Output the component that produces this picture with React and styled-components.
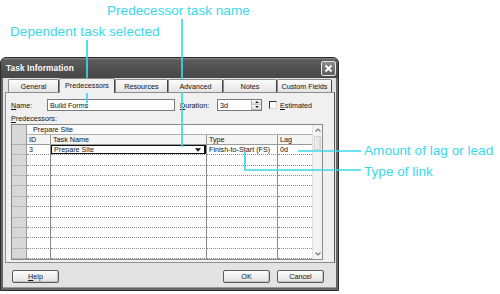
import React from 'react';
import styled, { createGlobalStyle } from 'styled-components';

const CYAN = '#3ad8ea';

const GlobalStyle = createGlobalStyle`
  html, body {
    margin: 0;
    padding: 0;
    background: #fff;
  }
  body {
    font-family: "Liberation Sans", Arial, sans-serif;
  }
`;

const tabs = [
  { label: 'General', w: 51 },
  { label: 'Predecessors', w: 56, active: true },
  { label: 'Resources', w: 53 },
  { label: 'Advanced', w: 55 },
  { label: 'Notes', w: 54 },
  { label: 'Custom Fields', w: 55 },
];

const EMPTY_ROWS = 10;

function DownTri({ size = 5 }) {
  return (
    <svg width={size} height={size - 2} viewBox="0 0 5 3">
      <polygon points="0,0 5,0 2.5,3" fill="#111" />
    </svg>
  );
}

function UpTri({ size = 5 }) {
  return (
    <svg width={size} height={size - 2} viewBox="0 0 5 3">
      <polygon points="0,3 5,3 2.5,0" fill="#111" />
    </svg>
  );
}

function Chevron({ up }) {
  return (
    <svg width="6" height="4" viewBox="0 0 6 4">
      <polyline
        points={up ? '0.5,3.5 3,1 5.5,3.5' : '0.5,0.5 3,3 5.5,0.5'}
        fill="none"
        stroke="#777"
        strokeWidth="1.2"
      />
    </svg>
  );
}

function App() {
  return (
    <>
      <GlobalStyle />
      <Stage>
        <Window>
          <TitleBar>
            <Title>Task Information</Title>
            <CloseBtn>
              <svg width="9" height="9" viewBox="0 0 9 9">
                <path d="M1.5 1.5 L7.5 7.5 M7.5 1.5 L1.5 7.5" stroke="#fff" strokeWidth="1.8" />
              </svg>
            </CloseBtn>
          </TitleBar>

          <Client>
            <TabStrip>
              {tabs.map((t) => (
                <Tab key={t.label} $w={t.w} $active={t.active}>
                  {t.label}
                </Tab>
              ))}
            </TabStrip>

            <Panel>
              <FieldRow>
                <Label $w={36}>
                  <u>N</u>ame:
                </Label>
                <TextBox $w={128}>Build Forms</TextBox>
                <Label $w={37} $ml={5}>
                  <u>D</u>uration:
                </Label>
                <SpinBox>
                  <SpinText>3d</SpinText>
                  <Spinner>
                    <SpinHalf>
                      <UpTri size={4} />
                    </SpinHalf>
                    <SpinHalf>
                      <DownTri size={4} />
                    </SpinHalf>
                  </Spinner>
                </SpinBox>
                <CheckBox />
                <Label $ml={3}>
                  <u>E</u>stimated
                </Label>
              </FieldRow>

              <SectionLabel>
                <u>P</u>redecessors:
              </SectionLabel>

              <GridFrame>
                <Grid>
                  <Corner />
                  <EditBar>Prepare Site</EditBar>
                  <HeadCell>ID</HeadCell>
                  <HeadCell>Task Name</HeadCell>
                  <HeadCell>Type</HeadCell>
                  <HeadCell $last>Lag</HeadCell>

                  <RowHead />
                  <Cell>3</Cell>
                  <Cell $flush>
                    <Combo>
                      <span>Prepare Site</span>
                      <DownTri size={6} />
                    </Combo>
                  </Cell>
                  <Cell>Finish-to-Start (FS)</Cell>
                  <Cell $last>0d</Cell>

                  {Array.from({ length: EMPTY_ROWS }).map((_, i) => (
                    <React.Fragment key={i}>
                      <RowHead />
                      <Cell />
                      <Cell />
                      <Cell />
                      <Cell $last />
                    </React.Fragment>
                  ))}
                </Grid>
                <ScrollBar>
                  <ScrollBtn>
                    <Chevron up />
                  </ScrollBtn>
                  <Thumb />
                  <ScrollTrack />
                  <ScrollBtn>
                    <Chevron />
                  </ScrollBtn>
                </ScrollBar>
              </GridFrame>
            </Panel>

            <ButtonRow>
              <Button>
                <u>H</u>elp
              </Button>
              <ButtonGroup>
                <Button>OK</Button>
                <Button>Cancel</Button>
              </ButtonGroup>
            </ButtonRow>
          </Client>
        </Window>

        <Callout $x={107} $y={3.5}>Predecessor task name</Callout>
        <Callout $x={10} $y={24.5}>Dependent task selected</Callout>
        <Callout $x={364} $y={144}>Amount of lag or lead</Callout>
        <Callout $x={364} $y={164.5}>Type of link</Callout>

        <Leaders width="500" height="294" viewBox="0 0 500 294">
          <g stroke={CYAN} strokeWidth="1.7" fill="none">
            <line x1="182" y1="19" x2="182" y2="147" />
            <line x1="87" y1="40" x2="87" y2="103" />
            <line x1="298" y1="151" x2="361" y2="151" />
            <polyline points="245,152 245,170 361,170" />
          </g>
        </Leaders>
      </Stage>
    </>
  );
}

const Stage = styled.div`
  position: relative;
  width: 500px;
  height: 294px;
  box-sizing: border-box;
  padding-top: 57px;
  overflow: hidden;
  background: #fff;
`;

const Window = styled.div`
  width: 339px;
  height: 234px;
  box-sizing: border-box;
  border: 1px solid #2c2c2c;
  border-radius: 6px 6px 0 0;
  background: #666;
  display: flex;
  flex-direction: column;
  overflow: hidden;
`;

const TitleBar = styled.div`
  height: 20px;
  flex-shrink: 0;
  display: flex;
  align-items: center;
  justify-content: space-between;
  padding: 0 2px 0 5px;
  background: linear-gradient(#8a8a8a 0, #5c5c5c 2px, #4f4f4f 60%, #474747 100%);
`;

const Title = styled.div`
  color: #fff;
  font-size: 8.3px;
  font-weight: bold;
  letter-spacing: 0.1px;
`;

const CloseBtn = styled.div`
  width: 13px;
  height: 13px;
  border: 1px solid #e6e6e6;
  border-radius: 2px;
  background: linear-gradient(#8c8c8c, #5e5e5e);
  display: flex;
  align-items: center;
  justify-content: center;
`;

const Client = styled.div`
  flex: 1;
  margin: 0 2px 2px;
  padding: 0 1px 0 2px;
  background: #e3e3e3;
  border-bottom: 1px solid #9a9a9a;
  display: flex;
  flex-direction: column;
  font-size: 7.2px;
  color: #111;
`;

const TabStrip = styled.div`
  display: flex;
  align-items: flex-end;
  height: 13px;
  margin-top: 1px;
  padding-left: 3px;
  position: relative;
  z-index: 1;
`;

const Tab = styled.div`
  width: ${(p) => p.$w}px;
  box-sizing: border-box;
  height: ${(p) => (p.$active ? 15 : 13)}px;
  margin-bottom: ${(p) => (p.$active ? -1 : 0)}px;
  border: 1px solid #8c8c8c;
  border-right-color: #444;
  border-bottom: none;
  border-radius: 2px 2px 0 0;
  background: ${(p) =>
    p.$active ? '#f0f0f0' : 'linear-gradient(#fbfbfb, #e4e4e4)'};
  display: flex;
  align-items: center;
  justify-content: center;
  padding-bottom: ${(p) => (p.$active ? 2 : 0)}px;
  white-space: nowrap;
`;

const Panel = styled.div`
  height: 171px;
  box-sizing: border-box;
  border: 1px solid #8c8c8c;
  border-right-color: #555;
  background: #f0f0f0;
  padding: 6px 0 0 5px;
  display: flex;
  flex-direction: column;
`;

const FieldRow = styled.div`
  display: flex;
  align-items: center;
  height: 12px;
`;

const Label = styled.div`
  width: ${(p) => (p.$w ? `${p.$w}px` : 'auto')};
  margin-left: ${(p) => p.$ml || 0}px;
  white-space: nowrap;
  flex-shrink: 0;
`;

const TextBox = styled.div`
  width: ${(p) => p.$w}px;
  height: 12px;
  box-sizing: border-box;
  border: 1px solid #7a7a7a;
  background: #fff;
  padding-left: 2px;
  display: flex;
  align-items: center;
`;

const SpinBox = styled.div`
  width: 45px;
  height: 12px;
  box-sizing: border-box;
  border: 1px solid #7a7a7a;
  background: #fff;
  display: flex;
`;

const SpinText = styled.div`
  flex: 1;
  padding-left: 2px;
  display: flex;
  align-items: center;
`;

const Spinner = styled.div`
  width: 9px;
  display: flex;
  flex-direction: column;
  border-left: 1px solid #bbb;
`;

const SpinHalf = styled.div`
  flex: 1;
  background: linear-gradient(#fafafa, #dcdcdc);
  border-bottom: 1px solid #c4c4c4;
  display: flex;
  align-items: center;
  justify-content: center;
`;

const CheckBox = styled.div`
  width: 8px;
  height: 8px;
  box-sizing: border-box;
  margin-left: 7px;
  background: #fff;
  border: 1px solid #d8d8d8;
  border-top-color: #333;
  border-left-color: #333;
`;

const SectionLabel = styled.div`
  margin-top: 3px;
  height: 9px;
  line-height: 9px;
`;

const GridFrame = styled.div`
  margin-top: 1px;
  width: 312px;
  height: 136px;
  box-sizing: border-box;
  border: 1px solid #8a8a8a;
  background: #fff;
  display: flex;
`;

const Grid = styled.div`
  width: 300px;
  display: grid;
  grid-template-columns: 15px 24px 156px 71px 34px;
  grid-template-rows: 10px 10px repeat(11, 10.36px);
  align-content: start;
`;

const Corner = styled.div`
  grid-row: 1 / span 2;
  background: #d8d8d8;
  border-right: 1px solid #9a9a9a;
  border-bottom: 1px solid #b0b0b0;
`;

const EditBar = styled.div`
  grid-column: 2 / span 4;
  padding-left: 6px;
  display: flex;
  align-items: center;
  border-bottom: 1px solid #b0b0b0;
  background: #fbfbfb;
`;

const HeadCell = styled.div`
  padding-left: 2px;
  display: flex;
  align-items: center;
  background: #f4f4f4;
  border-right: ${(p) => (p.$last ? 'none' : '1px solid #9a9a9a')};
  border-bottom: 1px solid #9a9a9a;
  white-space: nowrap;
`;

const RowHead = styled.div`
  background: #d8d8d8;
  border-right: 1px solid #9a9a9a;
  border-bottom: 1px solid #b8b8b8;
`;

const Cell = styled.div`
  padding-left: ${(p) => (p.$flush ? 0 : 2)}px;
  display: flex;
  align-items: center;
  border-right: ${(p) => (p.$last ? 'none' : '1px solid #8a8a8a')};
  border-bottom: 1px dotted #8a8a8a;
  white-space: nowrap;
  overflow: hidden;
`;

const Combo = styled.div`
  flex: 1;
  height: 100%;
  box-sizing: border-box;
  border: 1px solid #111;
  border-right-width: 2px;
  padding: 0 3px 0 2px;
  display: flex;
  align-items: center;
  justify-content: space-between;
`;

const ScrollBar = styled.div`
  width: 10px;
  display: flex;
  flex-direction: column;
  background: #f2f2f2;
  border-left: 1px solid #e0e0e0;
`;

const ScrollBtn = styled.div`
  height: 10px;
  display: flex;
  align-items: center;
  justify-content: center;
  background: #f4f4f4;
`;

const Thumb = styled.div`
  height: 12px;
  margin: 1px 1px 0;
  border: 1px solid #cfcfcf;
  border-radius: 1px;
  background: linear-gradient(90deg, #f4f4f4, #dedede);
`;

const ScrollTrack = styled.div`
  flex: 1;
`;

const ButtonRow = styled.div`
  margin-top: 7px;
  display: flex;
  justify-content: space-between;
  padding: 0 11px 0 7px;
`;

const ButtonGroup = styled.div`
  display: flex;
  gap: 7px;
`;

const Button = styled.div`
  width: 47px;
  height: 13px;
  box-sizing: border-box;
  border: 1px solid #5c5c5c;
  border-radius: 2px;
  background: linear-gradient(#fdfdfd, #e2e2e2);
  box-shadow: inset -1px -1px 0 #c4c4c4;
  display: flex;
  align-items: center;
  justify-content: center;
`;

const Callout = styled.div`
  position: absolute;
  left: ${(p) => p.$x}px;
  top: ${(p) => p.$y}px;
  color: ${CYAN};
  font-family: "Liberation Sans", Arial, Helvetica, sans-serif;
  font-size: 13.6px;
  line-height: 1;
  white-space: nowrap;
`;

const Leaders = styled.svg`
  position: absolute;
  left: 0;
  top: 0;
  pointer-events: none;
`;

export default App;
